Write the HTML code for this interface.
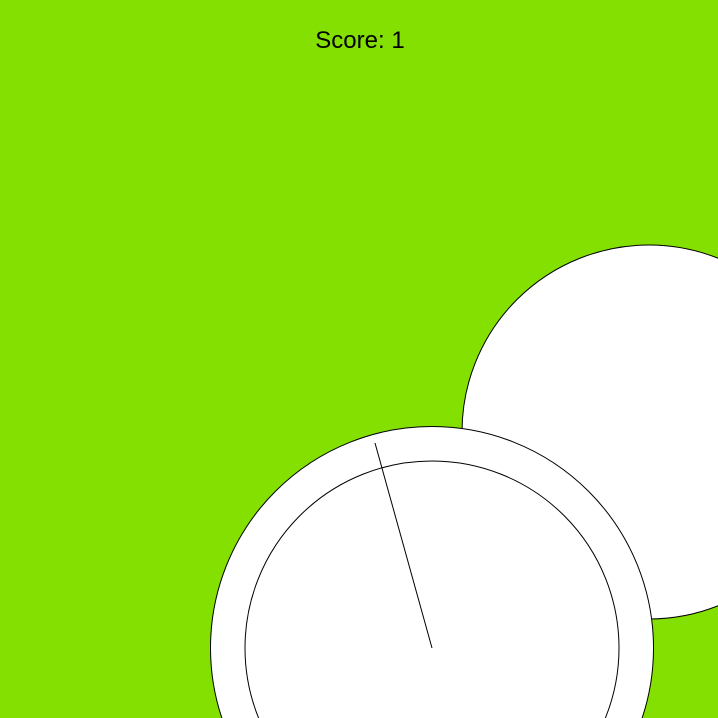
<!DOCTYPE html>
<html><head><style>
html,body{margin:0;padding:0;width:718px;height:718px;overflow:hidden;background:#84e000;}
svg{position:absolute;left:0;top:0;}
</style></head><body>
<svg width="718" height="718" viewBox="0 0 718 718">
<rect width="718" height="718" fill="#84e000"/>
<circle cx="649" cy="432" r="187" fill="#fff" stroke="#000" stroke-width="1"/>
<circle cx="432" cy="648" r="221.5" fill="#fff" stroke="#000" stroke-width="1"/>
<circle cx="432" cy="648" r="187" fill="#fff" stroke="#000" stroke-width="1"/>
<line x1="432" y1="648" x2="375" y2="443" stroke="#000" stroke-width="1"/>
<text x="360" y="48" text-anchor="middle" font-family="Liberation Sans, sans-serif" font-size="24" fill="#000">Score: 1</text>
</svg>
</body></html>
